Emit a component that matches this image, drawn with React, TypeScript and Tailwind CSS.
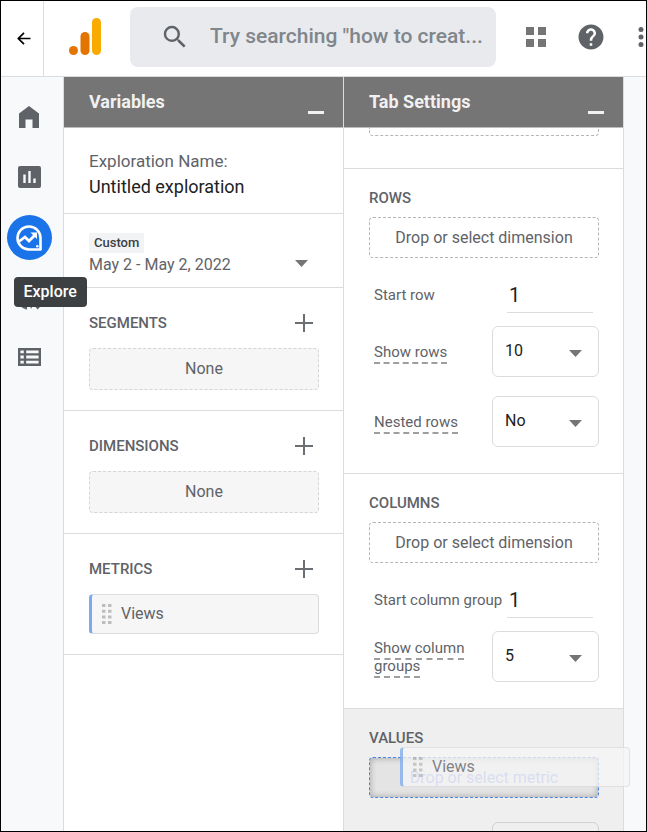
import { useState, type ReactNode } from 'react';
import { MdSearch, MdHelp } from 'react-icons/md';

export default function App() {
  const [search, setSearch] = useState('');

  return (
    <div className="h-screen flex flex-col overflow-hidden border border-black bg-white font-[Roboto,sans-serif] text-[#5f6368]">
      <header className="flex h-[76px] shrink-0 border-b border-[#dadce0]">
        <button aria-label="Back" className="flex w-[43px] shrink-0 items-center justify-center border-r border-[#dadce0] pl-1 text-black">
          <svg width="14" height="13" viewBox="0 0 14 13" fill="none" stroke="currentColor" strokeWidth="1.7">
            <path d="M13.5 6.5H1.5M7 .8 1.3 6.5 7 12.2" />
          </svg>
        </button>
        <div className="flex h-[72px] min-w-0 flex-1 items-center overflow-hidden pl-[25px]">
          <AnalyticsLogo />
          <label className="ml-[29px] flex h-[60px] min-w-0 flex-1 items-center rounded-lg bg-[#e8eaed] pl-[30px] pr-1">
            <MdSearch className="size-[30px] shrink-0" />
            <input
              type="text"
              aria-label="Search"
              value={search}
              onChange={(e) => setSearch(e.target.value)}
              placeholder={'Try searching "how to creat...'}
              className="ml-5 w-full min-w-0 bg-transparent text-[21px] font-medium outline-none placeholder:text-[#80868b]"
            />
          </label>
          <button aria-label="Apps" className="ml-[30px] shrink-0">
            <svg width="20" height="20" viewBox="0 0 20 20" fill="#757575">
              <path d="M0 0h8v8H0zM12 0h8v8h-8zM0 12h8v8H0zM12 12h8v8h-8z" />
            </svg>
          </button>
          <button aria-label="Help" className="ml-[30px] shrink-0">
            <MdHelp className="size-[30px]" />
          </button>
          <button aria-label="More" className="-mr-0.5 ml-8 shrink-0">
            <svg width="10" height="20" viewBox="0 0 10 20" fill="currentColor">
              <circle cx="3" cy="2.5" r="2.5" />
              <circle cx="3" cy="10" r="2.5" />
              <circle cx="3" cy="17.5" r="2.5" />
            </svg>
          </button>
        </div>
      </header>

      <div className="flex min-h-0 flex-1 bg-[#f8f9fb]">
        <Sidebar />
        <Panel title="Variables">
          <VariablesPanel />
        </Panel>
        <Panel title="Tab Settings">
          <TabSettingsPanel />
        </Panel>
      </div>
    </div>
  );
}

function Sidebar() {
  return (
    <nav className="flex w-[63px] shrink-0 flex-col items-center gap-[15px] border-r border-[#dadce0] pr-1.5 pt-[18px]">
      <NavLink label="Home">
        <svg width="20" height="22" viewBox="0 0 20 22" fill="currentColor">
          <path d="M10 0 0 7.5V22h6.5v-8.5h7V22H20V7.5z" />
        </svg>
      </NavLink>
      <NavLink label="Reports">
        <svg width="23" height="22" viewBox="0 0 23 22">
          <rect width="23" height="22" rx="2" fill="currentColor" />
          <path d="M6.5 8.5V17M11.5 5V17M16.5 12.5V17" stroke="#f8f9fb" strokeWidth="2.4" />
        </svg>
      </NavLink>
      <div className="relative">
        <a href="#explore" aria-label="Explore" className="flex size-[45px] items-center justify-center rounded-full bg-[#1a73e8] text-white">
          <svg width="28" height="28" viewBox="0 0 28 28" fill="none" stroke="currentColor">
            <path d="M14 2.5a11.5 11.5 0 1 0 0 23h11.5V14A11.5 11.5 0 0 0 14 2.5z" strokeWidth="2.6" strokeLinejoin="round" />
            <path d="m4 17.5 6-4.5 4 4 6.500-6.500" strokeWidth="2.8" />
            <path d="M15.500 8.500h6.500v6.500z" fill="currentColor" stroke="none" />
            <circle cx="22.3" cy="22.3" r="1.3" fill="currentColor" stroke="none" />
          </svg>
        </a>
        <div role="tooltip" className="absolute left-[7px] top-[62px] z-10 rounded bg-[#3c4043] px-2.5 py-[5px] text-base leading-5 font-medium text-white">
          Explore
        </div>
      </div>
      <NavLink label="Advertising">
        <svg width="24" height="26" viewBox="0 0 24 26" fill="none" stroke="currentColor" strokeWidth="3">
          <path d="M21.5 12A10 10 0 1 0 10 24.2" />
          <path d="m10 12 4 13 2.5-4.5 4 5L23 23l-4-4.5 4-2.5z" fill="currentColor" stroke="none" />
        </svg>
      </NavLink>
      <NavLink label="Configure">
        <svg width="23" height="18" viewBox="0 0 23 18" fill="none" stroke="currentColor" strokeWidth="2.4">
          <path d="M1.2 1.2h20.6v15.6H1.2zM1.2 6.4h20.6M1.2 11.6h20.6M7 1v16" />
        </svg>
      </NavLink>
    </nav>
  );
}

function NavLink({ label, children }: { label: string; children: ReactNode }) {
  return (
    <a href={`#${label.toLowerCase()}`} aria-label={label} className="flex size-[45px] items-center justify-center pb-0.5">
      {children}
    </a>
  );
}

function Panel({ title, children }: { title: string; children: ReactNode }) {
  return (
    <section className="flex w-[280px] shrink-0 flex-col border-r border-[#dadce0] bg-white">
      <div className="flex h-[51px] shrink-0 items-center justify-between border-b border-[#bdbdbd] bg-[#757575] pl-[25px] pr-[19px]">
        <h2 className="text-lg font-bold text-[#f1f1f1]">{title}</h2>
        <button aria-label={`Minimize ${title}`} className="flex h-6 items-end">
          <span className="block h-[3px] w-4 bg-[#f1f1f1]" />
        </button>
      </div>
      <div className="min-h-0 flex-1">{children}</div>
    </section>
  );
}

function VariablesPanel() {
  return (
    <>
      <div className="border-b border-[#dadce0] px-[25px] pb-[13px] pt-5 leading-[26px]">
        <p className="text-[17px]">Exploration Name:</p>
        <p className="text-[18px] text-[#202124]">Untitled exploration</p>
      </div>

      <button className="flex w-full items-end justify-between border-b border-[#dadce0] px-[25px] pb-2.5 pt-[19px] text-left">
        <span>
          <span className="block w-fit bg-[#f1f3f4] px-[5px] text-[13px] leading-5 font-medium text-[#3c4043]">Custom</span>
          <span className="block text-base leading-6">May 2 - May 2, 2022</span>
        </span>
        <Caret className="mb-2.5 mr-2.5" />
      </button>

      <VariableGroup title="SEGMENTS">
        <EmptySlot />
      </VariableGroup>
      <VariableGroup title="DIMENSIONS">
        <EmptySlot />
      </VariableGroup>
      <VariableGroup title="METRICS">
        <MetricChip name="Views" />
      </VariableGroup>
    </>
  );
}

function VariableGroup({ title, children }: { title: string; children: ReactNode }) {
  return (
    <div className="border-b border-[#dadce0] pb-5 pl-[25px] pr-6 pt-[23px]">
      <div className="mb-[13px] flex h-6 items-center justify-between pr-1.5">
        <h3 className="text-[15px] font-medium">{title}</h3>
        <button aria-label={`Add ${title.toLowerCase()}`}>
          <svg width="18" height="18" viewBox="0 0 18 18" stroke="#6b6e72" strokeWidth="2">
            <path d="M9 0v18M0 9h18" />
          </svg>
        </button>
      </div>
      {children}
    </div>
  );
}

function EmptySlot() {
  return (
    <div className="flex h-[42px] items-center justify-center rounded-sm border border-dashed border-[#d5d5d5] bg-[#f6f6f6] text-base">
      None
    </div>
  );
}

function MetricChip({ name }: { name: string }) {
  return (
    <div className="flex h-10 items-center gap-[9px] rounded-sm border border-l-3 border-[#dadce0] border-l-[#7baaf0] bg-[#f6f6f6] pl-2.5 text-base">
      <svg width="10" height="20" viewBox="0 0 10 20" fill="#bdbdbd">
        <path d="M0 0h3.5v3H0zM6 0h3.5v3H6zM0 5.7h3.5v3H0zM6 5.7h3.5v3H6zM0 11.4h3.5v3H0zM6 11.4h3.5v3H6zM0 17h3.5v3H0zM6 17h3.5v3H6z" />
      </svg>
      {name}
    </div>
  );
}

function TabSettingsPanel() {
  return (
    <div className="flex h-full flex-col">
      <div className="shrink-0 border-b border-[#dadce0] pb-8 pl-[25px] pr-6">
        <div className="h-2 rounded-b border border-t-0 border-dashed border-[#b5b5b5]" />
      </div>

      <SettingsGroup title="ROWS">
        <DropZone text="Drop or select dimension" />
        <NumberField id="start-row" label="Start row" />
        <div className="mt-[13px] space-y-[19px]">
          <SelectField id="show-rows" label="Show rows" options={['10', '25', '50']} />
          <SelectField id="nested-rows" label="Nested rows" options={['No', 'Yes']} />
        </div>
      </SettingsGroup>

      <SettingsGroup title="COLUMNS">
        <DropZone text="Drop or select dimension" />
        <NumberField id="start-column" label="Start column group" />
        <div className="mt-[13px]">
          <SelectField id="show-columns" label="Show column groups" options={['5', '10', '15']} />
        </div>
      </SettingsGroup>

      {/* Drop target, with the metric being dragged over it */}
      <div className="relative min-h-0 flex-1 bg-[#efefef] pl-[25px] pr-6 pt-5">
        <h3 className="mb-2.5 text-[15px] leading-[18px] font-medium">VALUES</h3>
        <button className="block h-[41px] w-full rounded border border-dashed border-[#4a86e0] bg-[#e4e4e4] text-base text-[#8095e0] shadow-[inset_0_0_6px_rgba(0,0,0,0.3)]">
          Drop or select metric
        </button>
        <div className="absolute left-14 top-[38px] z-10 w-[230px] opacity-75">
          <MetricChip name="Views" />
        </div>
        <div className="mt-6 h-2.5 overflow-hidden">
          <select aria-label="Show values" className="ml-auto block h-[51px] w-[107px] appearance-none rounded-md border border-[#d0d0d0]" />
        </div>
      </div>
    </div>
  );
}

function SettingsGroup({ title, children }: { title: string; children: ReactNode }) {
  return (
    <div className="shrink-0 border-b border-[#dadce0] pb-[26px] pl-[25px] pr-6 pt-5">
      <h3 className="mb-2.5 text-[15px] leading-[18px] font-medium">{title}</h3>
      {children}
    </div>
  );
}

function DropZone({ text }: { text: string }) {
  return <button className="block h-[41px] w-full rounded border border-dashed border-[#b5b5b5] text-base">{text}</button>;
}

function NumberField({ id, label }: { id: string; label: string }) {
  return (
    <div className="mt-[19px] flex items-center justify-between pl-[5px] pr-1.5">
      <label htmlFor={id} className="text-[15px] whitespace-nowrap">{label}</label>
      <input id={id} type="text" defaultValue="1" className="h-9 w-[86px] border-b border-[#dadce0] px-0.5 text-xl text-[#202124] outline-none" />
    </div>
  );
}

function SelectField({ id, label, options }: { id: string; label: string; options: string[] }) {
  return (
    <div className="flex items-center justify-between pl-[5px]">
      <label htmlFor={id} className="w-[100px] text-[15px] leading-[18px]">
        <span className="border-b-2 border-dashed border-[#9e9e9e] pb-px">{label}</span>
      </label>
      <div className="relative">
        <select id={id} className="block h-[51px] w-[107px] appearance-none rounded-md border border-[#dadce0] bg-white pb-0.5 pl-3 text-base text-[#202124]">
          {options.map((o) => (
            <option key={o}>{o}</option>
          ))}
        </select>
        <Caret className="pointer-events-none absolute right-[17px] top-6" />
      </div>
    </div>
  );
}

function Caret({ className }: { className: string }) {
  return (
    <svg width="13" height="7" viewBox="0 0 13 7" fill="#757575" className={className}>
      <path d="M0 0h13L6.5 7z" />
    </svg>
  );
}

function AnalyticsLogo() {
  return (
    <svg width="32" height="38" viewBox="0 0 32 38" className="shrink-0">
      <rect x="23" width="9" height="37" rx="4.5" fill="#f9ab00" />
      <rect x="11.5" y="14" width="9" height="23" rx="4.5" fill="#e37400" />
      <circle cx="4.5" cy="32.5" r="4.5" fill="#e37400" />
    </svg>
  );
}
